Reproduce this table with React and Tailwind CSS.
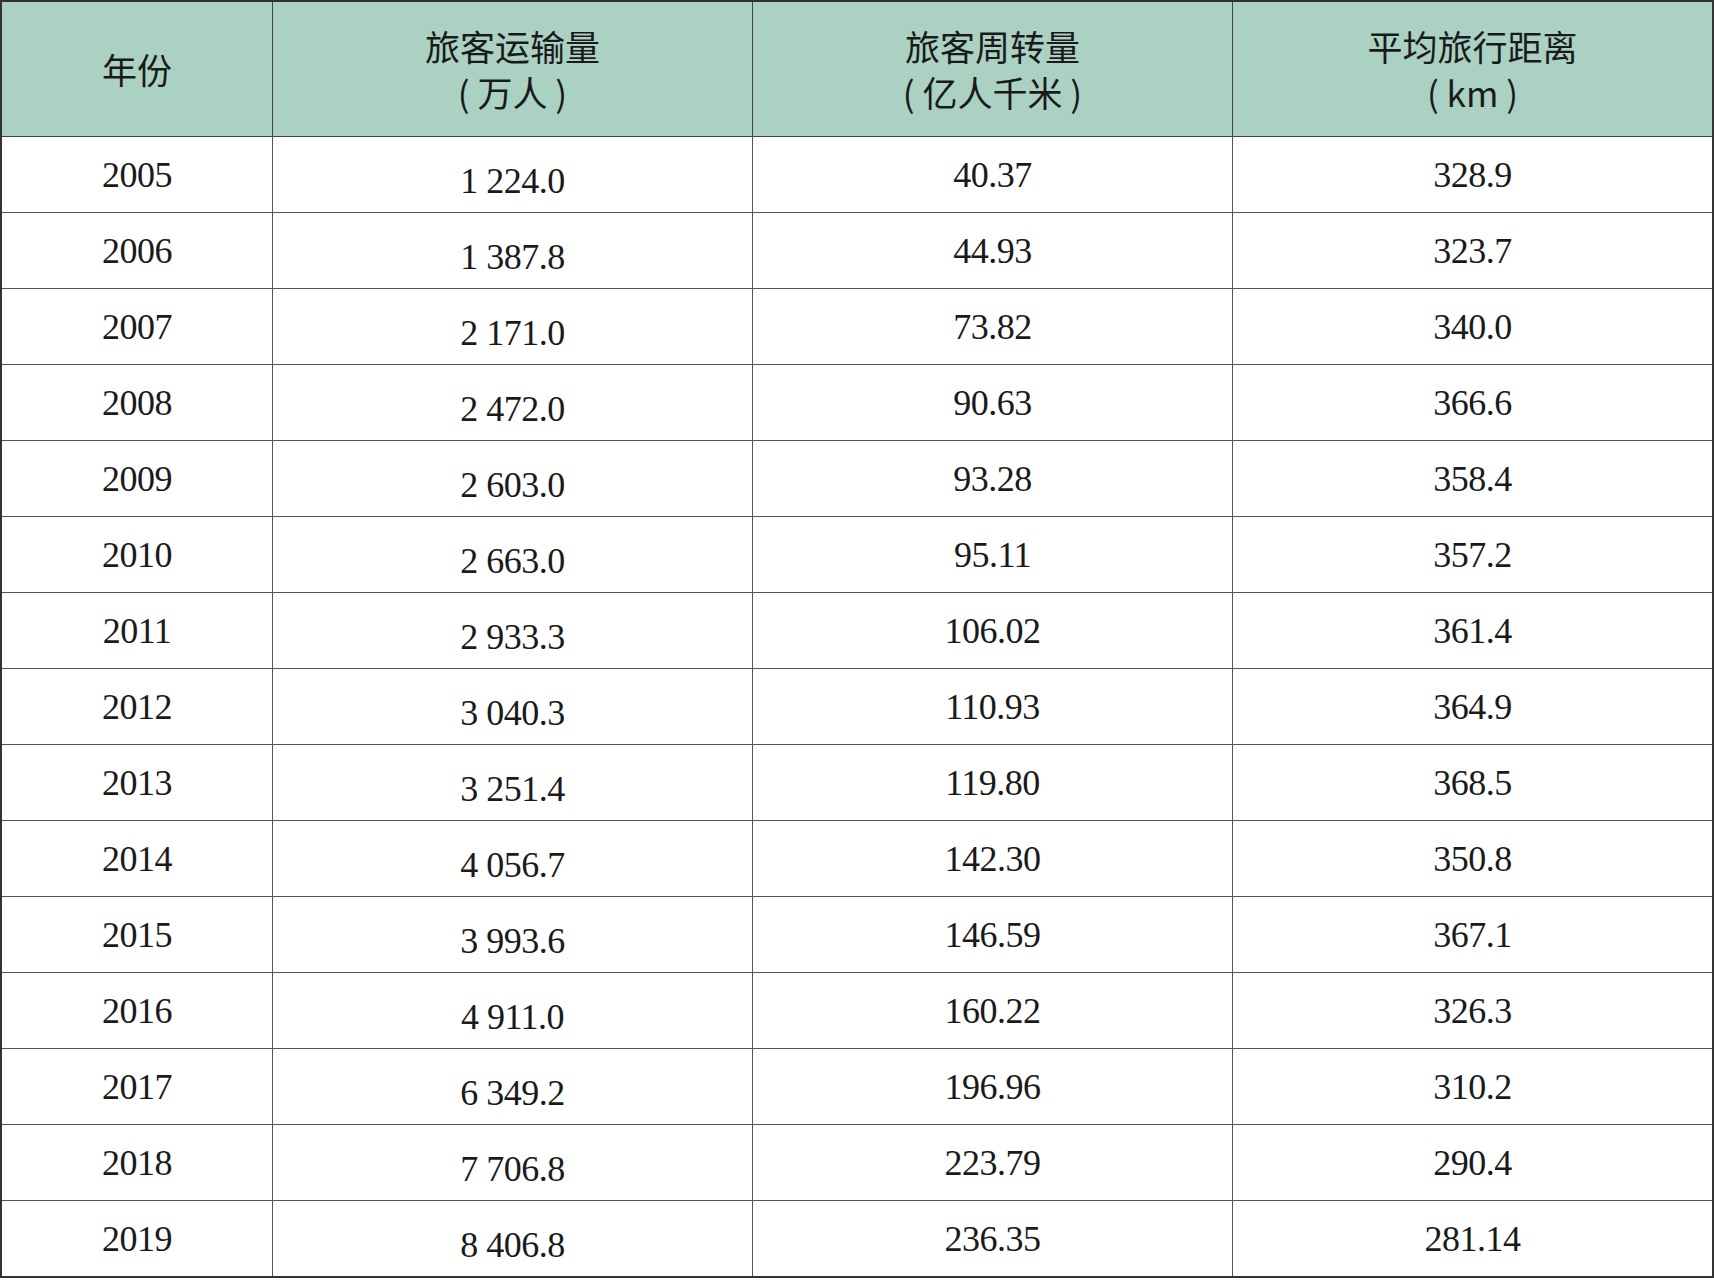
import React from "react";

const ROWS = [
  ["2005", "1 224.0", "40.37", "328.9"],
  ["2006", "1 387.8", "44.93", "323.7"],
  ["2007", "2 171.0", "73.82", "340.0"],
  ["2008", "2 472.0", "90.63", "366.6"],
  ["2009", "2 603.0", "93.28", "358.4"],
  ["2010", "2 663.0", "95.11", "357.2"],
  ["2011", "2 933.3", "106.02", "361.4"],
  ["2012", "3 040.3", "110.93", "364.9"],
  ["2013", "3 251.4", "119.80", "368.5"],
  ["2014", "4 056.7", "142.30", "350.8"],
  ["2015", "3 993.6", "146.59", "367.1"],
  ["2016", "4 911.0", "160.22", "326.3"],
  ["2017", "6 349.2", "196.96", "310.2"],
  ["2018", "7 706.8", "223.79", "290.4"],
  ["2019", "8 406.8", "236.35", "281.14"],
];

const HEAD = [
  ["年份"],
  ["旅客运输量", "( 万人 )"],
  ["旅客周转量", "( 亿人千米 )"],
  ["平均旅行距离", "( km )"],
];

const sans = "font-['Noto_Sans_CJK_SC','Noto_Sans',sans-serif]";
const serif = "font-['Liberation_Serif','Noto_Sans_CJK_SC',serif]";

export default function App() {
  return (
    <div className="w-[1714px] h-[1280px] bg-white">
      <div className="grid grid-cols-[271px_480px_480px_479px] border-2 border-[#333] text-[#1a1a1a]">
        {HEAD.map((h, i) => (
          <div
            key={i}
            className={`h-[135px] bg-[#abd1c3] border-b border-[#444] flex flex-col items-center justify-center text-[35px] font-normal ${sans} ${i < 3 ? "border-r" : ""}`}
          >
            {h.map((t, j) => (
              <div key={j} className="h-[46px] leading-[46px] overflow-visible">
                {t}
              </div>
            ))}
          </div>
        ))}
        {ROWS.map((r, ri) =>
          r.map((c, ci) => (
            <div
              key={ri + "-" + ci}
              className={`flex items-center justify-center text-[36px] tracking-[-0.5px] ${serif} border-[#555] ${ri < ROWS.length - 1 ? "h-[76px] border-b" : "h-[75px]"} ${ci < 3 ? "border-r" : ""} ${ci === 1 ? "pt-[12px]" : ""}`}
            >
              {c}
            </div>
          ))
        )}
      </div>
    </div>
  );
}
